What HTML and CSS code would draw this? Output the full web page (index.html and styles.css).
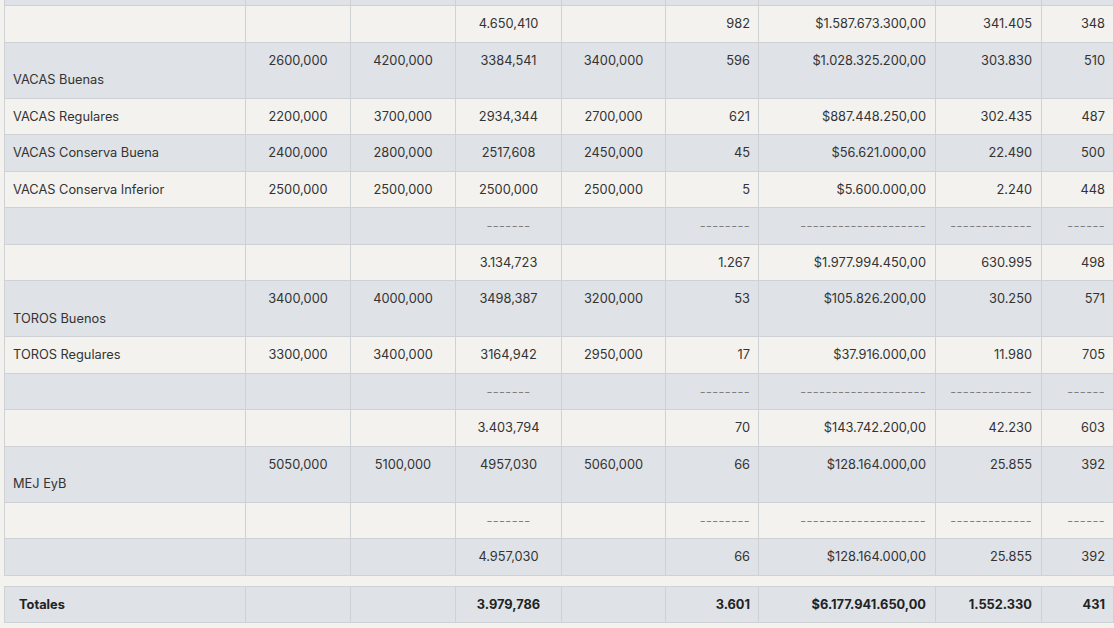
FILE: index.html
```html
<!DOCTYPE html>
<html lang="es">
<head>
<meta charset="utf-8">
<title>Tabla</title>
<link rel="stylesheet" href="styles.css">
</head>
<body>
<div class="page">
<table class="grid main">
<colgroup>
<col class="c1"><col class="c2"><col class="c3"><col class="c4"><col class="c5"><col class="c6"><col class="c7"><col class="c8"><col class="c9">
</colgroup>
<tbody>
<tr class="hidden-row"><td></td><td></td><td></td><td></td><td></td><td></td><td></td><td></td><td></td></tr>
<tr><td class="lbl"></td><td class="ctr"></td><td class="ctr"></td><td class="ctr">4.650,410</td><td class="ctr"></td><td class="num">982</td><td class="num">$1.587.673.300,00</td><td class="num">341.405</td><td class="num">348</td></tr>
<tr><td class="lbl"><br>VACAS Buenas</td><td class="ctr">2600,000</td><td class="ctr">4200,000</td><td class="ctr">3384,541</td><td class="ctr">3400,000</td><td class="num">596</td><td class="num">$1.028.325.200,00</td><td class="num">303.830</td><td class="num">510</td></tr>
<tr><td class="lbl">VACAS Regulares</td><td class="ctr">2200,000</td><td class="ctr">3700,000</td><td class="ctr">2934,344</td><td class="ctr">2700,000</td><td class="num">621</td><td class="num">$887.448.250,00</td><td class="num">302.435</td><td class="num">487</td></tr>
<tr><td class="lbl">VACAS Conserva Buena</td><td class="ctr">2400,000</td><td class="ctr">2800,000</td><td class="ctr">2517,608</td><td class="ctr">2450,000</td><td class="num">45</td><td class="num">$56.621.000,00</td><td class="num">22.490</td><td class="num">500</td></tr>
<tr><td class="lbl">VACAS Conserva Inferior</td><td class="ctr">2500,000</td><td class="ctr">2500,000</td><td class="ctr">2500,000</td><td class="ctr">2500,000</td><td class="num">5</td><td class="num">$5.600.000,00</td><td class="num">2.240</td><td class="num">448</td></tr>
<tr class="sep"><td class="lbl"></td><td></td><td></td><td class="ctr">-------</td><td></td><td class="num">--------</td><td class="num">--------------------</td><td class="num">-------------</td><td class="num">------</td></tr>
<tr><td class="lbl"></td><td class="ctr"></td><td class="ctr"></td><td class="ctr">3.134,723</td><td class="ctr"></td><td class="num">1.267</td><td class="num">$1.977.994.450,00</td><td class="num">630.995</td><td class="num">498</td></tr>
<tr><td class="lbl"><br>TOROS Buenos</td><td class="ctr">3400,000</td><td class="ctr">4000,000</td><td class="ctr">3498,387</td><td class="ctr">3200,000</td><td class="num">53</td><td class="num">$105.826.200,00</td><td class="num">30.250</td><td class="num">571</td></tr>
<tr><td class="lbl">TOROS Regulares</td><td class="ctr">3300,000</td><td class="ctr">3400,000</td><td class="ctr">3164,942</td><td class="ctr">2950,000</td><td class="num">17</td><td class="num">$37.916.000,00</td><td class="num">11.980</td><td class="num">705</td></tr>
<tr class="sep"><td class="lbl"></td><td></td><td></td><td class="ctr">-------</td><td></td><td class="num">--------</td><td class="num">--------------------</td><td class="num">-------------</td><td class="num">------</td></tr>
<tr><td class="lbl"></td><td class="ctr"></td><td class="ctr"></td><td class="ctr">3.403,794</td><td class="ctr"></td><td class="num">70</td><td class="num">$143.742.200,00</td><td class="num">42.230</td><td class="num">603</td></tr>
<tr><td class="lbl"><br>MEJ EyB</td><td class="ctr">5050,000</td><td class="ctr">5100,000</td><td class="ctr">4957,030</td><td class="ctr">5060,000</td><td class="num">66</td><td class="num">$128.164.000,00</td><td class="num">25.855</td><td class="num">392</td></tr>
<tr class="sep"><td class="lbl"></td><td></td><td></td><td class="ctr">-------</td><td></td><td class="num">--------</td><td class="num">--------------------</td><td class="num">-------------</td><td class="num">------</td></tr>
<tr><td class="lbl"></td><td class="ctr"></td><td class="ctr"></td><td class="ctr">4.957,030</td><td class="ctr"></td><td class="num">66</td><td class="num">$128.164.000,00</td><td class="num">25.855</td><td class="num">392</td></tr>
</tbody>
</table>
<table class="grid totals">
<colgroup>
<col class="c1"><col class="c2"><col class="c3"><col class="c4"><col class="c5"><col class="c6"><col class="c7"><col class="c8"><col class="c9">
</colgroup>
<tbody>
<tr><td class="lbl tot-lbl">Totales</td><td></td><td></td><td class="ctr">3.979,786</td><td></td><td class="num">3.601</td><td class="num">$6.177.941.650,00</td><td class="num">1.552.330</td><td class="num">431</td></tr>
</tbody>
</table>
</div>
</body>
</html>
```

FILE: styles.css
```css
html, body {
  margin: 0;
  padding: 0;
  background: #f3f2ee;
  overflow: hidden;
}

body {
  font-family: "Inter", "Liberation Sans", sans-serif;
  font-size: 12.8px;
  color: #333;
}

.page {
  width: 1114px;
  height: 628px;
  overflow: hidden;
  padding-left: 4px;
  box-sizing: border-box;
}

.grid {
  border-collapse: collapse;
  table-layout: fixed;
  width: 1109px;
}

.main {
  margin-top: -31.5px;
}

.grid td {
  border: 1px solid #cfd2d5;
  padding: 8px;
  line-height: 19.5px;
  height: 19.5px;
  vertical-align: top;
  white-space: nowrap;
}

.c1 { width: 241px; }
.c2 { width: 105px; }
.c3 { width: 105px; }
.c4 { width: 106px; }
.c5 { width: 104px; }
.c6 { width: 93px; }
.c7 { width: 177px; }
.c8 { width: 106px; }
.c9 { width: 72px; }

.main tbody tr:nth-child(odd) { background: #dfe2e6; }
.main tbody tr:nth-child(even) { background: #f3f2ee; }

.lbl { text-align: left; }
.ctr { text-align: center; }
.num { text-align: right; }

.grid td:nth-child(7),
.grid td:nth-child(8) { padding-right: 9px; }

.sep td { color: #7c7e81; letter-spacing: 0.4px; }

.totals {
  margin-top: 10px;
  background: #dfe2e6;
}

.totals td {
  font-weight: 700;
  color: #222;
}

.totals .tot-lbl {
  padding-left: 14px;
}
```
